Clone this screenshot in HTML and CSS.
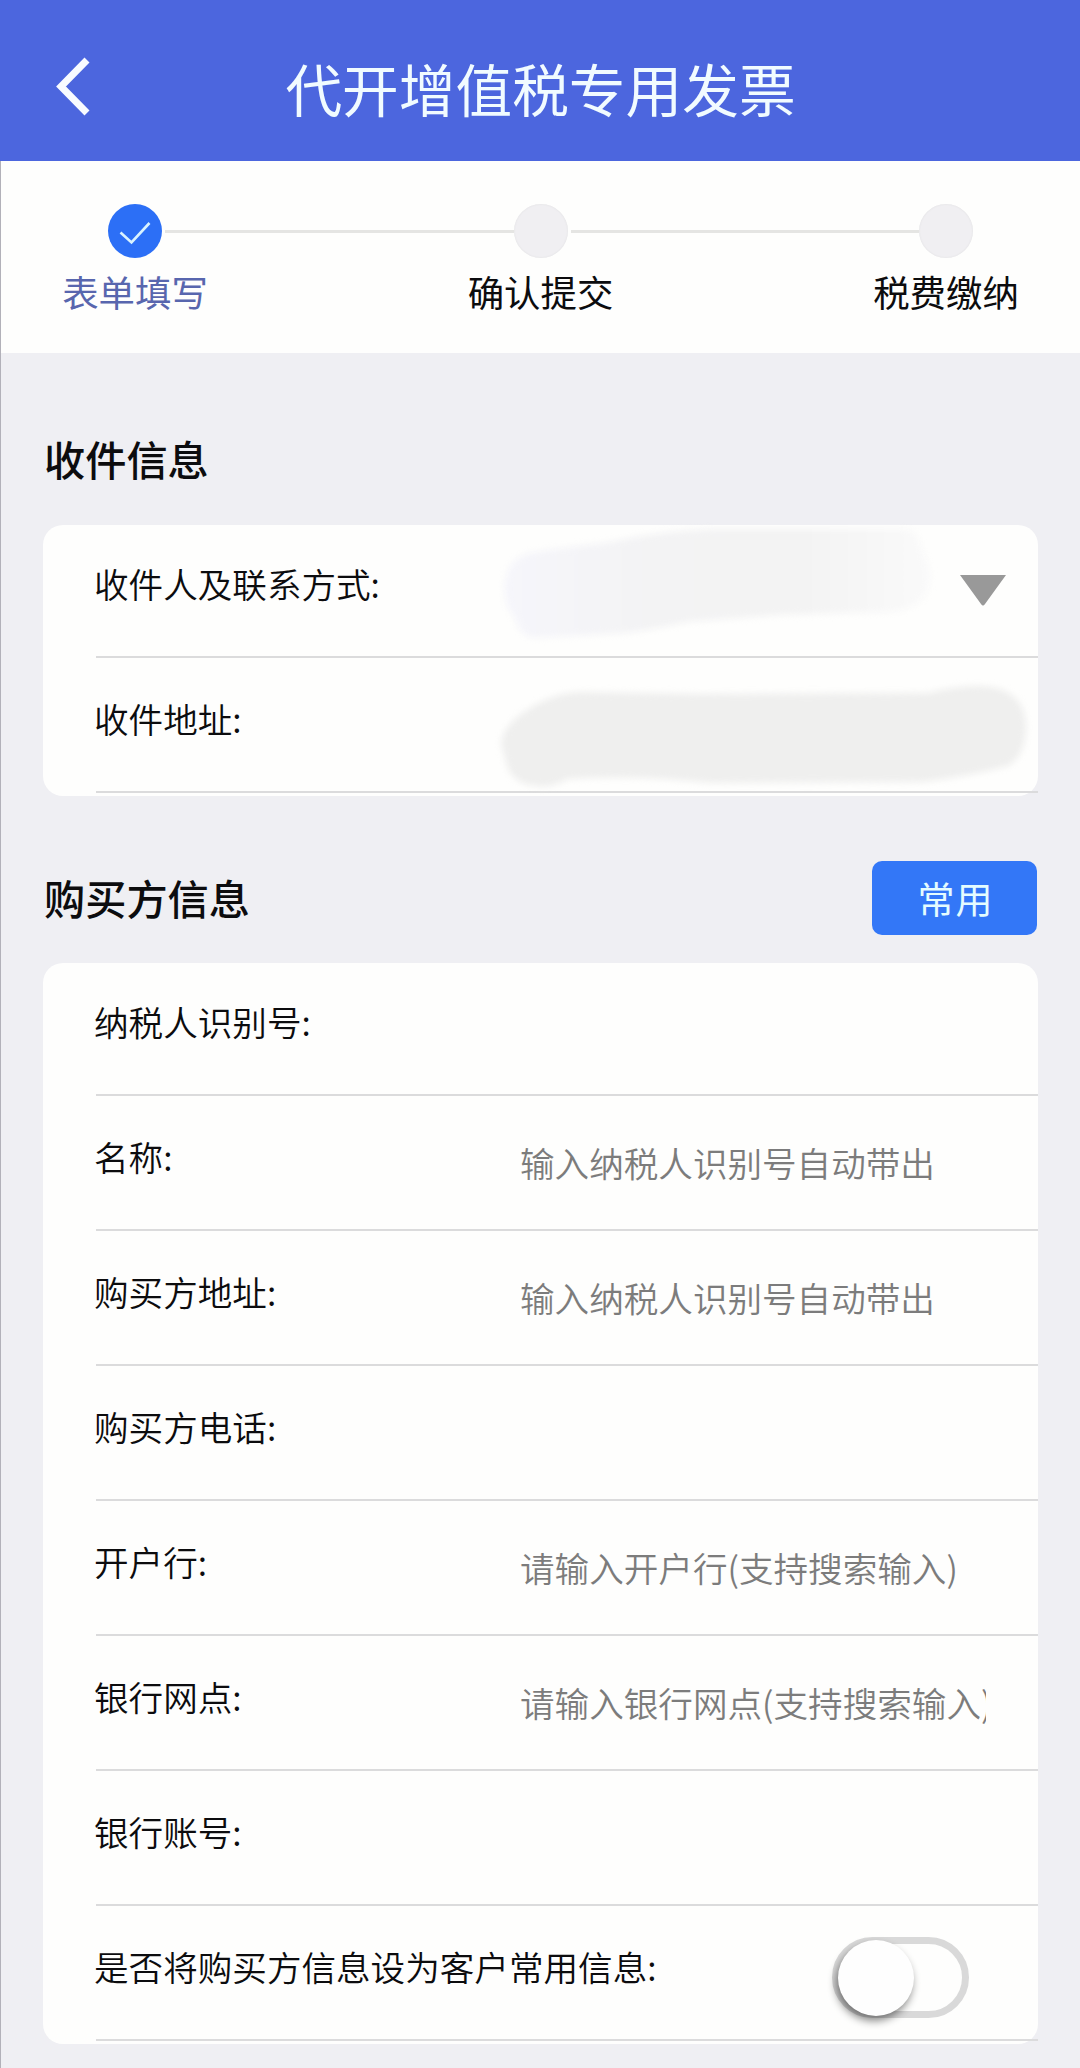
FILE: index.html
```html
<!DOCTYPE html>
<html lang="zh-CN">
<head>
<meta charset="utf-8">
<title>代开增值税专用发票</title>
<link rel="stylesheet" href="styles.css">
</head>
<body>
<div class="page">
  <header class="header">
    <svg class="back" width="40" height="64" viewBox="0 0 40 64"><path d="M34 5L8 31.500L34 58" fill="none" stroke="#f8fbff" stroke-width="7"/></svg>
    <h1 class="title">代开增值税专用发票</h1>
  </header>
  <nav class="steps">
    <div class="step active">
      <span class="dot"><svg width="54" height="54" viewBox="0 0 54 54"><path d="M12.500 28.500L23.500 38.500L41.500 19" fill="none" stroke="#d9f3ff" stroke-width="2.600"/></svg></span>
      <span class="step-label">表单填写</span>
    </div>
    <span class="line"></span>
    <div class="step">
      <span class="dot"></span>
      <span class="step-label">确认提交</span>
    </div>
    <span class="line"></span>
    <div class="step">
      <span class="dot"></span>
      <span class="step-label">税费缴纳</span>
    </div>
  </nav>
  <main class="content">
    <div class="section-head first"><h2 class="section-title">收件信息</h2></div>
    <section class="card">
      <div class="row">
        <span class="label">收件人及联系方式:</span>
        <svg class="smudge" width="440" height="132" viewBox="496 525 440 132">
          <defs><linearGradient id="fade"><stop offset="0" stop-color="#f6f6fb"/><stop offset=".35" stop-color="#f3f3f4"/><stop offset=".7" stop-color="#f3f3f3"/><stop offset="1" stop-color="#fafafa"/></linearGradient></defs>
          <path d="M508 572Q514 555 540 552L610 543Q660 532 710 530L905 530Q918 532 920 545L929 567Q935 590 918 604Q905 613 886 613L780 616L687 623Q640 634 610 635L535 639Q520 638 515 620Q498 598 508 572Z" fill="url(#fade)"/>
        </svg>
        <svg class="caret" width="46" height="31" viewBox="0 0 46 31"><path d="M0 0H46L25 29Q23 32 21 29Z" fill="#999"/></svg>
      </div>
      <div class="row">
        <span class="label">收件地址:</span>
        <svg class="smudge" width="540" height="112" viewBox="496 680 540 112">
          <path d="M501 745Q503 722 541 703Q562 693 580 693L700 695L928 694Q955 687 978 687Q1002 687 1014 698Q1026 708 1026 730Q1025 757 1008 767Q970 777 924 783L710 784Q640 776 568 780Q550 790 535 787Q516 785 508 770Z" fill="#efefee"/>
        </svg>
      </div>
    </section>
    <div class="section-head"><h2 class="section-title">购买方信息</h2><button class="common">常用</button></div>
    <section class="card">
      <div class="row"><span class="label">纳税人识别号:</span></div>
      <div class="row"><span class="label">名称:</span><span class="hint">输入纳税人识别号自动带出</span></div>
      <div class="row"><span class="label">购买方地址:</span><span class="hint">输入纳税人识别号自动带出</span></div>
      <div class="row"><span class="label">购买方电话:</span></div>
      <div class="row"><span class="label">开户行:</span><span class="hint">请输入开户行(支持搜索输入)</span></div>
      <div class="row"><span class="label">银行网点:</span><span class="hint">请输入银行网点(支持搜索输入)</span></div>
      <div class="row"><span class="label">银行账号:</span></div>
      <div class="row"><span class="label wide">是否将购买方信息设为客户常用信息:</span><span class="switch"><span class="knob"></span></span></div>
    </section>
  </main>
</div>
</body>
</html>
```

FILE: styles.css
```css
* { box-sizing: border-box; }

body {
  margin: 0;
  background: #efeff3;
  font-family: "Noto Sans CJK SC", sans-serif;
  color: #0c0c0e;
}

.page {
  height: 2068px;
  overflow: hidden;
  box-shadow: inset 1px 0 #b2b1b9;
}

.header {
  height: 161px;
  display: grid;
  grid-template-columns: 200px 1fr 200px;
  align-items: center;
  background: #4c66de;
  padding-top: 13px;
}

.back { margin-left: 53px; }

.title {
  margin: 0 0 1px 1px;
  text-align: center;
  font-size: 56.700px;
  font-weight: 400;
  line-height: 80px;
  color: #f1fbff;
  white-space: nowrap;
}

.steps {
  height: 192px;
  margin-left: 1px;
  padding: 43px 61px 0;
  display: flex;
  align-items: flex-start;
  background: #fefefd;
}

.step {
  width: 146px;
  display: flex;
  flex-direction: column;
  align-items: center;
  gap: 8px;
}

.dot {
  width: 54px;
  height: 54px;
  border-radius: 50%;
  background: #f0eff2;
  box-shadow: inset 0 0 2px #dededf;
}

.active .dot { background: #2c6ff6; box-shadow: none; }
.dot svg { display: block; }

.step-label {
  font-size: 36.400px;
  line-height: 50px;
  white-space: nowrap;
}

.active .step-label { color: #5866ae; }

.line {
  flex: 1;
  height: 3px;
  margin: 26px -46px 0 -43px;
  background: #e5e5e3;
}

.content { padding: 0 42px 0 43px; }

.section-head {
  height: 167px;
  padding: 0 1px 28px 1px;
  display: flex;
  align-items: flex-end;
  justify-content: space-between;
}

.section-head.first { height: 172px; }

.section-title {
  margin: 0 0 7px;
  font-size: 41.200px;
  font-weight: 500;
  line-height: 62px;
}

.first .section-title { margin-bottom: 8px; }

.common {
  width: 165px;
  height: 74px;
  padding: 0 0 0 2px;
  border: 0;
  border-radius: 10px;
  background: #3377f7;
  color: #e4fcff;
  font: 37px/74px "Noto Sans CJK SC", sans-serif;
  letter-spacing: 1px;
}

.card {
  padding-bottom: 3px;
  border-radius: 20px;
  background: #fefefd;
}

.row {
  position: relative;
  height: 135px;
  margin-left: 53px;
  padding-bottom: 49px;
  border-bottom: 2px solid #dbdbdc;
  display: flex;
  align-items: flex-end;
}

.row:first-child { height: 133px; }

.label {
  width: 426px;
  flex: none;
  margin-left: -2px;
  font-size: 34.600px;
  font-weight: 350;
  line-height: 48px;
  white-space: nowrap;
}

.label.wide { width: 738px; }

.hint {
  width: 466px;
  margin-bottom: -6px;
  overflow: hidden;
  font-size: 34.600px;
  font-weight: 350;
  line-height: 48px;
  color: #7c7c7c;
  white-space: nowrap;
}

.smudge {
  position: absolute;
  left: 400px;
  bottom: 0;
  filter: blur(3px);
}

.caret { margin: 0 0 1px 440px; }

.switch {
  width: 137px;
  height: 81px;
  flex: none;
  margin-bottom: -28px;
  padding: 0;
  border: 7px solid #d9d9d9;
  border-radius: 41px;
}

.knob {
  display: block;
  width: 76px;
  height: 76px;
  margin: -4px 0 0 -1px;
  border-radius: 50%;
  background: #fefefe;
  box-shadow: -2px 5px 9px rgba(0, 0, 0, .48);
}
```
